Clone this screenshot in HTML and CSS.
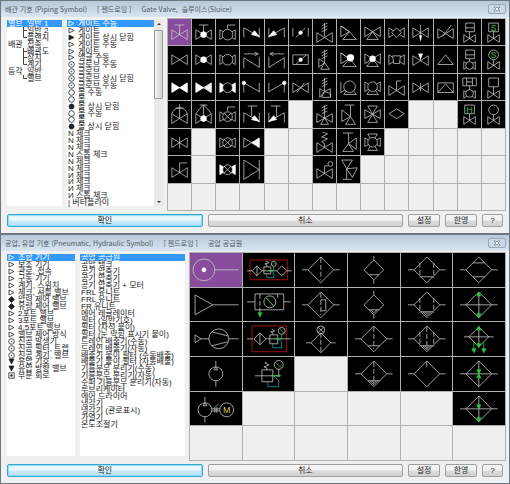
FILE: index.html
```
<!DOCTYPE html>
<html lang="ko">
<head>
    <meta charset="UTF-8">
    <meta name="viewport" content="width=device-width, initial-scale=1.0">
    <link rel="stylesheet" href="styles.css">
    <title>배관 기호</title>
</head>
<body>
    <section class="dialog piping">
        <header class="titlebar">
            <span>배관 기호 (Piping Symbol)</span>
            <span>[ 젠드로잉 ]</span>
            <span class="current">Gate Valve,&nbsp; 슬루이스(Sluice)</span>
            <button class="close" aria-label="닫기"><svg viewBox="0 0 8 6"><path d="M1 1h2l1 1 1-1h2L5 3l2 2H5L4 4 3 5H1l2-2z"/></svg></button>
        </header>
        <div class="content">
            <ul class="list" id="piping-groups" role="listbox" aria-label="분류"></ul>
            <div class="scroll-list">
                <ul class="list" id="piping-names" role="listbox" aria-label="기호"></ul>
                <div class="scrollbar">
                    <span class="arrow up"></span>
                    <span class="thumb"></span>
                    <span class="arrow down"></span>
                </div>
            </div>
            <div class="symbols" id="piping-symbols"></div>
        </div>
        <footer class="buttons">
            <button class="wide ok">확인</button>
            <button class="wide">취소</button>
            <button class="small">설정</button>
            <button class="small">한영</button>
            <button class="help">?</button>
        </footer>
    </section>

    <section class="dialog pneumatic">
        <header class="titlebar">
            <span>공압, 유압 기호 (Pneumatic, Hydraulic Symbol)</span>
            <span>[ 젠드로잉 ]</span>
            <span class="current">공압 공급원</span>
            <button class="close" aria-label="닫기"><svg viewBox="0 0 8 6"><path d="M1 1h2l1 1 1-1h2L5 3l2 2H5L4 4 3 5H1l2-2z"/></svg></button>
        </header>
        <div class="content">
            <ul class="list" id="air-groups" role="listbox" aria-label="분류"></ul>
            <ul class="list" id="air-names" role="listbox" aria-label="기호"></ul>
            <div class="symbols" id="air-symbols"></div>
        </div>
        <footer class="buttons">
            <button class="wide ok">확인</button>
            <button class="wide">취소</button>
            <button class="small">설정</button>
            <button class="small">한영</button>
            <button class="help">?</button>
        </footer>
    </section>

    <script src="script.js"></script>
</body>
</html>
```

FILE: styles.css
```
* {
    box-sizing: border-box;
}

body {
    margin: 0;
    height: 100vh;
    display: grid;
    grid-template-rows: 234fr 250fr;
    background-color: #555f68;
    font-family: "Liberation Sans", "Noto Sans CJK KR", sans-serif;
    font-size: 8px;
    color: #222;
}

.dialog {
    display: flex;
    flex-direction: column;
    min-height: 0;
    background-color: #f0f0f0;
    border: 1px solid #6d7780;
    padding: 0 3px 6px 6px;
}

.titlebar {
    display: flex;
    align-items: center;
    flex: none;
    gap: 10px;
    height: 16px;
    margin: 0 -3px 1px -6px;
    padding: 0 3px 1px 4px;
    background: linear-gradient(#b9c9d9, #d9e5f1);
    color: #505a64;
    font-family: "Noto Sans CJK KR", sans-serif;
    font-size: 7px;
    line-height: 12px;
    white-space: nowrap;
}

.close {
    width: 18px;
    height: 10px;
    margin-left: auto;
    padding: 0;
    border: 1px solid #98a8ba;
    border-radius: 2px;
    background-color: #cbd8e6;
    display: flex;
    align-items: center;
    justify-content: center;
}

.close svg {
    width: 8px;
    height: 6px;
    fill: #fff;
    stroke: #6c7785;
    stroke-width: 0.7;
}

.content {
    display: grid;
    flex: 1;
    min-height: 0;
}

.piping .content {
    grid-template-columns: 55px 96px 1fr;
    column-gap: 5px;
}

.pneumatic .content {
    grid-template-columns: 68px 105px 1fr;
    column-gap: 5px;
}

.list {
    display: grid;
    list-style: none;
    margin: 2px 0 5px;
    padding: 0;
    background-color: #fff;
    min-height: 0;
}

.piping .list {
    grid-template-rows: repeat(27, minmax(0, 1fr));
}

.pneumatic .list {
    grid-template-rows: repeat(29, minmax(0, 1fr));
}

.list li {
    display: flex;
    line-height: 7px;
    padding-left: 1px;
    min-height: 0;
    white-space: nowrap;
}

.list .selected {
    background-color: #3399ff;
    color: #fff;
}

.mark {
    flex: none;
    width: 10px;
}

.mark svg {
    display: block;
    width: 7px;
    height: 7px;
    fill: none;
    stroke: currentColor;
    stroke-width: 0.8;
}

.root {
    flex: none;
    width: 14px;
}

.branch {
    flex: none;
    width: 5px;
}

.branch svg {
    display: block;
    width: 5px;
    height: 7px;
    fill: none;
    stroke: #444;
}

.scroll-list {
    display: grid;
    grid-template-columns: 1fr 9px;
    min-height: 0;
}

.scrollbar {
    display: flex;
    flex-direction: column;
    align-items: center;
    margin: 2px 0 5px;
    background-color: #e9e9e9;
}

.arrow {
    border: 2px solid transparent;
    margin: 3px 0;
}

.up {
    border-top: 0;
    border-bottom: 2px solid #333;
    margin-bottom: 5px;
}

.down {
    border-bottom: 0;
    border-top: 2px solid #333;
    margin-top: auto;
}

.thumb {
    width: 9px;
    height: 37%;
    border: 1px solid #9a9a9a;
    border-radius: 1px;
    background: linear-gradient(90deg, #f5f5f5, #d0d0d0);
}

.symbols {
    display: grid;
    gap: 1px;
    margin-left: -1px;
    padding: 1px;
    background-color: #b0b0b0;
    min-height: 0;
}

.piping .symbols {
    grid-template: repeat(7, minmax(0, 1fr)) / repeat(14, minmax(0, 1fr));
}

.pneumatic .symbols {
    grid-template: repeat(6, minmax(0, 1fr)) / repeat(6, minmax(0, 1fr));
}

.cell {
    background-color: #efefef;
    min-height: 0;
}

.cell.drawn {
    background-color: #000;
}

.cell.selected {
    background-color: #884c9c;
}

.cell svg {
    display: block;
    width: 100%;
    height: 100%;
    fill: none;
    stroke: #c8c8c8;
    stroke-width: 0.8;
}

.cell .solid {
    fill: #fff;
    stroke: #fff;
}

.cell .mask {
    fill: #000;
}

.cell .dash {
    stroke-dasharray: 5 2;
}

.cell .green {
    stroke: #2fc23b;
}

.cell .arrowhead {
    fill: #2fc23b;
    stroke: #2fc23b;
}

.cell .red {
    stroke: #c41414;
}

.cell .cyan {
    stroke: #1f9fa8;
}

.cell text {
    stroke: none;
    fill: #2fc23b;
    font-size: 9px;
    text-anchor: middle;
}

.cell .yellow {
    fill: #d9d04a;
}

.buttons {
    display: flex;
    flex: none;
    gap: 5px;
    height: 13px;
    margin-top: 3px;
    padding-right: 3px;
}

.buttons button {
    font: inherit;
    line-height: 9px;
    color: #222;
    padding: 0;
    border: 1px solid #a0a0a0;
    border-radius: 2px;
    background: linear-gradient(#f3f3f3 45%, #dcdcdc 55%, #d0d0d0);
}

.buttons .wide {
    flex: 1;
}

.buttons .ok {
    border-color: #35a7d4;
    box-shadow: inset 0 0 1px 1px #8fdcf5;
    background: linear-gradient(#eaf7fd 45%, #cdeafa 55%, #b5e0f6);
}

.buttons .small {
    width: 32px;
}

.buttons .help {
    width: 21px;
}
```

FILE: script.js
```
const marks = {
    "▷": '<path d="M1 1v5l5-2.5z"/>',
    "▶": '<path d="M1 1v5l5-2.5z" fill="currentColor"/>',
    "▼": '<path d="M1 1h5L3.5 6z" fill="currentColor"/>',
    "○": '<circle cx="3.5" cy="3.5" r="2.8"/>',
    "●": '<circle cx="3.5" cy="3.5" r="2.5" fill="currentColor"/>',
    "⊙": '<circle cx="3.5" cy="3.5" r="2.8"/><circle cx="3.5" cy="3.5" r=".4"/>',
    "◈": '<path d="M3.5.5l3 3-3 3-3-3z" fill="currentColor"/>',
    "▣": '<path d="M.8.8h5.4v5.4H.8z"/><path d="M2.8 2.8h1.4v1.4H2.8z" fill="currentColor"/>'
};

const branches = {
    "├": "M1.5 0V7M1.5 3.5H5",
    "└": "M1.5 0V3.5H5"
};

function fillList(id, rows) {
    document.getElementById(id).innerHTML = rows.map((row, i) => {
        const [first, ...rest] = row.split(" ");
        const cls = i === 0 ? ' class="selected" aria-selected="true"' : "";
        let html = row;
        if (marks[first]) {
            html = `<span class="mark"><svg viewBox="0 0 7 7">${marks[first]}</svg></span>${rest.join(" ")}`;
        }
        return `<li role="option"${cls}>${html}</li>`;
    }).join("");
}

// root label, branch line, name
function fillTree(id, rows) {
    document.getElementById(id).innerHTML = rows.map(([root, line, name], i) => {
        const cls = i === 0 ? ' class="selected" aria-selected="true"' : "";
        const branch = line ? `<svg viewBox="0 0 5 7"><path d="${branches[line]}"/></svg>` : "";
        return `<li role="option"${cls}><span class="root">${root}</span><span class="branch">${branch}</span>${name}</li>`;
    }).join("");
}

fillTree("piping-groups", [
    ["밸브", "", "일반 1"],
    ["", "├", "일반 2"],
    ["", "└", "플랜지"],
    ["배관", "", "접속"],
    ["", "├", "배관도"],
    ["", "├", "장치"],
    ["", "└", "계기"],
    ["등각", "", "일반"],
    ["", "└", "밸브"]
]);

fillList("piping-names", [
    "▷ 게이트 수동", "▷ 게이트", "▶ 게이트 상시 닫힘", "▷ 게이트 수동", "▷ 게이트", "▷ 앵글 수동",
    "⊙ 글로브 수동", "⊙ 글로브", "⊙ 글로브 상시 닫힘", "⊙ 글로브 수동",
    "○ 볼 수동", "○ 볼", "● 볼 상시 닫힘", "○ 볼 수동", "○ 볼", "● 볼 상시 닫힘",
    "N 체크", "N 체크", "N 체크", "N 스톱 체크", "N 체크", "N 체크",
    "И 체크", "И 체크", "И 체크", "И 스톱 체크", "| 버터플라이"
]);

fillList("air-groups", [
    "▷ 조합 기기", "▷ 보조 기기", "▷ 관로, 접속", "▷ 구동 기기", "▷ 계기, 스위치", "▷ 체크, 셔틀 밸브",
    "◈ 압력 제어 밸브", "◈ 유량 제어 밸브", "▷ 2포트 밸브", "▷ 3포트 밸브", "▷ 4,5포트 밸브",
    "▷ 밸브 제어 방식", "⊙ 진공 발생기", "⊙ 진공 필터, 트랩", "⊙ 진공 계기, 밸브",
    "▼ 유압 기호", "▼ 유압 방향 밸브", "▣ 부분 회로"
]);

fillList("air-names", [
    "공압 공급원", "공압 탱크", "공기 압축기", "공기 압축기", "공기 압축기 + 모터",
    "FRL 유니트", "FRL 유니트", "FR 유니트", "에어 레귤레이터",
    "필터 (일반기호)", "필터 (자석 붙이)", "필터 (눈 막힘 표시기 붙이)",
    "드레인 배출기(수동)", "드레인 배출기(자동)", "배출기 붙이 필터 (수동배출)", "배출기 붙이 필터 (자동배출)",
    "기름분무 분리기(수동)", "기름분무 분리기(자동)", "수퍼 기름분무 분리기(자동)",
    "루브리케이터", "에어 드라이어", "냉각기", "냉각기 (관로표시)", "가열기", "온도조절기"
]);

const p = (d, cls = "") => `<path class="${cls}" d="${d}"/>`;
const c = (x, y, r, cls = "") => `<circle class="${cls}" cx="${x}" cy="${y}" r="${r}"/>`;
const mirror = (s) => `<g transform="matrix(-1 0 0 1 24 0)">${s}</g>`;

// valve bodies, 24 x 27 drawing area
const bow = (y, cls) => p(`M4 ${y - 5}v10L20 ${y - 5}v10z`, cls);
const smallBow = (y) => p(`M6 ${y - 4}v8l12-8v8z`);
const handle = (y) => p(`M7 6h10M12 6V${y}`);
const lever = p("M12 10V6h8");
const spring = p("M12 18V4M9 7l6-3M9 10l6-3M9 13l6-3");
const threeWay = p("M4 8v10l16-10v10zM12 13l6 8H6z");
const fourWay = p("M4 9v9L20 9v9zM7 5h10L7 22h10z");
const angle = p("M4 7v11l9-5zM13 13l7 8H6zM4 7l9 6");
const lowAngle = p("M6 13v9l6-5zM12 17l5 7H8z");
const check = p("M4 9v10M20 9v10M4 9l16 9");
const tip = p("M20 18l-8-2 3-4z", "solid");
const stopCheck = p("M4 12v10M20 12v10M4 12l16 9M8 5h10M12 5v11") + p("M20 21l-8-2 3-4z", "solid");

const piping = [
    [
        bow(16) + handle(16),
        bow(16) + handle(16) + c(12, 16, 3, "solid"),
        bow(16) + c(12, 16, 5.5, "mask") + lever,
        check + tip,
        mirror(check + tip),
        p("M4 9v9M20 9v9M7 19L17 9") + c(12, 14, 1.8, "solid"),
        bow(19) + spring,
        angle,
        threeWay,
        bow(14) + p("M12 9l5 5-5 5-5-5z", "mask"),
        bow(14) + p("M12 6v10") + p("M12 22l-1-5h2z", "solid"),
        bow(15) + p("M9 18l9-12"),
        smallBow(20) + p("M8 4h9v9H8zM8 9h9M12 13v7"),
        smallBow(20) + p("M7 4h10v9H7zM12 13v7") + '<text x="12" y="12">S</text>'
    ],
    [
        bow(14),
        bow(14) + c(12, 14, 3, "solid"),
        bow(14) + c(12, 14, 5.5, "mask"),
        p("M4 8h14M15 6l4 2-4 2M4 23V12l16 10V11"),
        p("M20 8H6M9 6L5 8l4 2M20 23V12L4 22V11"),
        p("M4 9h16v10H4zM7 19L18 9") + c(12, 14, 1.8, "solid"),
        lowAngle + spring,
        angle + c(14, 12, 3.5, "solid"),
        threeWay + c(12, 13, 3, "solid"),
        bow(14) + p("M8 10h8l-1 8H9z", "mask"),
        bow(15) + p("M12 15V8") + p("M10 8h4l-2 5z", "solid"),
        p("M12 9l8 10H4z"),
        smallBow(20) + p("M8 4h9v9H8zM8 9h9M12 13v3") + c(12, 20, 4, "mask"),
        smallBow(20) + c(12, 9, 5) + p("M12 14v6") + '<text x="12" y="12">S</text>'
    ],
    [
        bow(14, "solid"),
        bow(14, "solid") + p("M12 14l9-3M12 14l9 3", "mask"),
        bow(14, "solid") + c(12, 14, 5, "mask"),
        check + c(4, 9, 1.8, "solid"),
        mirror(check + c(4, 9, 1.8, "solid")),
        bow(14) + p("M8 19l8-10"),
        spring + p("M7 15v9l5-6zM12 18l6 2v4H9zM12 18l6-3v9"),
        p("M4 8v11l9-6M7 21h13l-3-4M7 21l3-4") + c(13, 13, 6, "mask"),
        threeWay + c(12, 13, 5, "mask"),
        bow(17) + p("M12 17V7h5"),
        bow(14) + p("M12 9v9"),
        p("M4 9h16v10H4zM4 19l8-9 8 9"),
        smallBow(21) + p("M5 4h14v8H5zM9 4v8M15 4v8M9 8h6M12 12v5") + c(12, 20, 4, "mask"),
        smallBow(21) + p("M7 4h10v9H7zM12 13v8")
    ],
    [
        bow(18) + p("M12 3v15M8 7h8M4 13q2-6 8-6t8 6"),
        bow(18) + p("M12 4v12M8 4h8M4 13q4-6 8-9 4 3 8 9") + c(12, 18, 3, "solid"),
        bow(16) + c(12, 16, 5, "mask") + p("M8 12l8 8M16 12l-8 8") + lever,
        stopCheck,
        mirror(stopCheck),
        "",
        spring + p("M4 13v9l16-9v9zM12 17l4 7H8z"),
        p("M8 4h10M14 4v12M5 9v12l9-5zM14 16l5 8H9z"),
        fourWay,
        p("M4 13l8-5 8 5-8 5z"),
        "",
        "",
        smallBow(20) + p("M7 4h10v9H7zM12 13v7") + '<text x="12" y="12">H</text>',
        smallBow(20) + c(12, 9, 5) + p("M12 14v6")
    ],
    [
        bow(14) + p("M12 8v12"),
        "",
        bow(14) + c(12, 14, 5, "mask") + p("M8 10l8 8M16 10l-8 8"),
        p("M4 9v10l8-5z") + p("M20 9v10l-8-5z", "solid"),
        "",
        "",
        bow(19) + p("M12 19v-4l-3-2 6-3-6-2 6-3-5-2"),
        p("M6 4h11M12 4v11M20 9v12l-8-6zM12 15l5 8H6z"),
        fourWay + c(12, 13.5, 5, "mask"),
        "", "", "", "", ""
    ],
    [
        bow(17) + p("M12 17V7h8"),
        "",
        bow(14, "solid") + c(12, 14, 5, "mask") + p("M8 10l8 8M16 10l-8 8"),
        p("M4 4v20l16-10zM20 4v20"),
        "",
        "",
        bow(18) + p("M12 18v-8h4") + c(18, 8, 2.5),
        p("M5 4h11l-6 9zM10 13l11-1-5 10zM10 13v11M6 24h9"),
        "", "", "", "", "", ""
    ],
    Array(14).fill("")
];

// fluid power symbols, 52 x 34 drawing area
const diamond = (x, y, r) => p(`M${x} ${y - r}l${r} ${r}-${r} ${r}-${r}-${r}z`);
const filter = diamond(26, 17, 13) + p("M7 17h6M39 17h6");
const core = p("M26 5v22", "dash");
const sides = p("M19 10v15M33 10v15", "dash");
const drain = p("M20 24h12");
const drip = p("M22 24l4 4 4-4M24 24l2 2 2-2");
const down = (x, y) => p(`M${x} ${y}l-2-4h4z`, "arrowhead");
const up = (x, y) => p(`M${x} ${y}l-2 4h4z`, "arrowhead");
const cross = filter + p("M13 17h26M26 4v26");

const air = [
    [
        c(14, 17, 11) + c(14, 17, 2, "solid") + p("M25 17h24"),
        p("M7 7h38v20H7z", "red") + p("M4 18h5M19 18h15M44 18h5M21 14h7v7h-7zM24 14v-2l-2-1 4-1-3-2") + diamond(14, 18, 5) + p("M14 13v10")
            + diamond(39, 18, 5) + p("M24 21v4h7v-5l-3-2", "cyan") + c(31, 11, 2.5) + p("M31 14v4M30 12l2-2M25 18h6", "green"),
        filter + core,
        diamond(26, 17, 10) + p("M26 3v4M26 27v4M21 22h10"),
        filter + sides + drain,
        filter + drain + p("M20 10h12")
    ],
    [
        p("M5 7v20l18-10zM23 17h26"),
        p("M12 6h29v16H12zM4 14h8M41 14h7M35 6v4") + p("M17 6v20", "dash") + down(17, 29) + c(27, 14, 6) + p("M23 10l8 8M24 10l6 8", "green"),
        filter + core + p("M26 12h5v11h-5"),
        diamond(26, 17, 10) + p("M26 3v4M26 27v4M21 22h10M23 22l3 3 3-3"),
        filter + sides + drain + drip,
        cross + up(26, 4) + down(26, 30)
    ],
    [
        p("M5 13v8l6-4zM11 17h8M39 17h10M22 10l16 4M22 24l16-4") + c(29, 17, 10),
        p("M9 4h35v26H9z", "red") + p("M4 17h6M23 17h25M27 13h8v9h-8zM30 13v-2l-2-1 4-1-3-2M17 11v12") + diamond(17, 17, 6)
            + p("M30 22v4h9v-6l-4-3", "cyan") + c(39, 9, 3.5) + p("M39 12v5M37 7l4 4M31 17h8", "green"),
        diamond(26, 21, 10) + p("M11 21h5M36 21h5") + p("M26 11v20", "dash") + c(26, 8, 4) + p("M23 5l6 6M29 5l-6 6"),
        filter + core + drain,
        filter + sides + core + drain + drip,
        diamond(26, 15, 10) + p("M11 15h30M26 5v20") + up(26, 4) + down(26, 26) + p("M21 20v8M31 20v8", "green") + down(21, 31) + down(31, 31)
    ],
    [
        c(26, 17, 7) + p("M26 4v6M26 24v6M24 13l2-3 2 3z"),
        p("M19 13h11v12H19zM12 19h26M36 12v7M24 13v-2l-3-1 5-2-4-2 2-1") + c(36, 8, 4.5) + p("M33 6l6 5M28 19h8", "green")
            + c(36, 19, 1, "arrowhead") + p("M25 25v5h11v-6l-5-5", "cyan"),
        "",
        filter + core + drain + drip,
        filter + p("M26 4v6"),
        cross + down(26, 17) + up(26, 17)
    ],
    [
        c(15, 18, 7) + p("M15 5v6M15 25v6M13 14l2-3 2 3zM22 17h8M22 19h8M25 15v6M27 15v6") + c(37, 18, 7)
            + p("M25 15l4-3", "green") + '<text class="yellow" x="37" y="21">M</text>',
        "", "", "", "",
        cross + down(26, 17) + down(26, 30)
    ],
    Array(6).fill("")
];

function fillSymbols(id, rows, width, height) {
    document.getElementById(id).innerHTML = rows.flat().map((symbol, i) => {
        if (!symbol) {
            return '<div class="cell"></div>';
        }
        const cls = i === 0 ? "cell drawn selected" : "cell drawn";
        return `<div class="${cls}"><svg viewBox="0 0 ${width} ${height}">${symbol}</svg></div>`;
    }).join("");
}

fillSymbols("piping-symbols", piping, 24, 27);
fillSymbols("air-symbols", air, 52, 34);
```
